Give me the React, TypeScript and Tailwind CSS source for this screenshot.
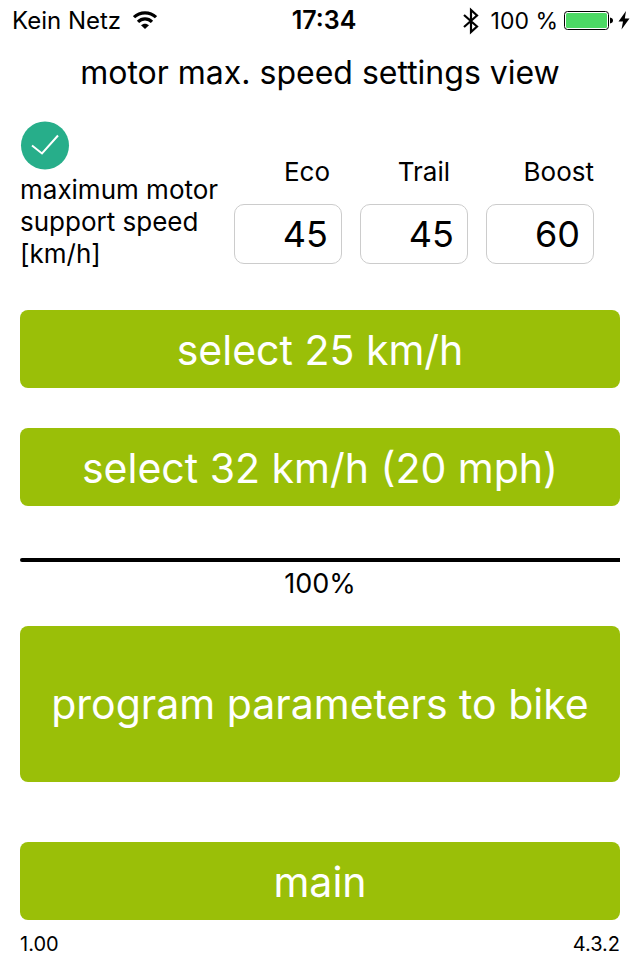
import { useState } from "react"

const BluetoothIcon = () => (
  <svg className="h-7 w-4" viewBox="0 0 16 28" fill="none" stroke="black" strokeWidth="2.2" aria-hidden="true">
    <path d="M1 8 L14 19.5 L8 25 V3 L14 8.5 L1 20" />
  </svg>
)

const WifiIcon = () => (
  <svg className="h-5 w-6" viewBox="0 0 24 20" fill="none" aria-hidden="true">
    <path d="M1 6.2 C7 0.3 17 0.3 23 6.2" stroke="black" strokeWidth="3.2" />
    <path d="M5 10.8 C9 6.8 15 6.8 19 10.8" stroke="black" strokeWidth="3.2" />
    <path d="M12 18 L8 14.2 C10.2 12.1 13.8 12.1 16 14.2 Z" fill="black" />
  </svg>
)

const BatteryIcon = () => (
  <svg className="h-5 w-[50px]" viewBox="0 0 50 20" aria-hidden="true">
    <rect x="0.5" y="0.5" width="44" height="18" rx="3" fill="white" stroke="black" />
    <rect x="2" y="2" width="41" height="15" rx="1.5" fill="#4cd964" />
    <path d="M46 6.5 C50 7 50 12 46 12.5 Z" fill="black" />
  </svg>
)

const BoltIcon = () => (
  <svg className="h-5 w-3" viewBox="0 0 12 20" aria-hidden="true">
    <path d="M8 0 L0.5 10.5 H5 L3.5 18.5 L11.5 7.5 H6.8 Z" fill="black" />
  </svg>
)

const StatusBar = () => (
  <header className="grid h-[42px] grid-cols-[1fr_auto_1fr] items-center pl-3 pr-2.5 text-[24px]">
    <div className="flex items-center gap-3">
      <p>Kein Netz</p>
      <WifiIcon />
    </div>
    <p className="pl-1.5 text-[25px] font-semibold">17:34</p>
    <div className="flex items-center justify-end">
      <BluetoothIcon />
      <p className="ml-3 mr-1.5 whitespace-nowrap text-[23px]">100 %</p>
      <BatteryIcon />
      <span className="ml-1"><BoltIcon /></span>
    </div>
  </header>
)

const BigButton = ({ label, tall = false }: { label: string; tall?: boolean }) => (
  <button
    type="button"
    className={`w-full rounded-lg bg-[#9abf08] px-4 text-[41px] leading-[48px] text-white ${tall ? "py-[54px]" : "pt-4 pb-3.5"}`}
  >
    {label}
  </button>
)

const modes = [
  { id: "eco", label: "Eco", speed: "45", labelClass: "pr-3" },
  { id: "trail", label: "Trail", speed: "45", labelClass: "pr-[18px]" },
  { id: "boost", label: "Boost", speed: "60", labelClass: "pr-0" },
]

const SpeedSettings = () => {
  const [speeds, setSpeeds] = useState(modes.map((mode) => mode.speed))

  return (
    <section className="flex items-end gap-3.5 pr-[26px]">
      <div className="w-[200px] shrink-0">
        <svg className="h-[50px] w-[50px]" viewBox="0 0 50 50" fill="none" role="img" aria-label="ok">
          <circle cx="25" cy="25.5" r="24" fill="#27ae8a" />
          <path d="M12 25.5 L22 33.5 L38 15.5" stroke="white" strokeWidth="2" />
        </svg>
        <p className="mt-1 text-[26px] leading-8">maximum motor support speed [km/h]</p>
      </div>
      <div className="mb-1.5 grid flex-1 grid-cols-3 gap-[18px]">
        {modes.map((mode, i) => (
          <div key={mode.id} className="flex min-w-0 flex-col gap-4">
            <label htmlFor={mode.id} className={`text-right text-[26px] leading-8 ${mode.labelClass}`}>
              {mode.label}
            </label>
            <input
              id={mode.id}
              type="text"
              inputMode="numeric"
              value={speeds[i]}
              onChange={(e) => setSpeeds(speeds.map((s, j) => (j === i ? e.target.value : s)))}
              className="h-[60px] w-full rounded-[10px] border border-[#cccccc] bg-white px-[13px] text-right text-[36px]"
            />
          </div>
        ))}
      </div>
    </section>
  )
}

export default function App() {
  return (
    <div className="min-h-screen bg-white font-['Inter',sans-serif] text-black">
      <StatusBar />
      <main className="px-5">
        <h1 className="pt-[11px] text-center text-[32px] leading-10">motor max. speed settings view</h1>
        <div className="mt-[27px]">
          <SpeedSettings />
        </div>
        <div className="mt-10 flex flex-col gap-10">
          <BigButton label="select 25 km/h" />
          <BigButton label="select 32 km/h (20 mph)" />
        </div>
        <div className="mt-[52px] h-1 rounded-l-sm bg-black" />
        <p className="mt-1 text-center text-[27px] leading-9">100%</p>
        <div className="mt-6 flex flex-col gap-[60px]">
          <BigButton label="program parameters to bike" tall />
          <BigButton label="main" />
        </div>
      </main>
      <footer className="flex justify-between px-5 pt-3 text-[20px] leading-6">
        <p>1.00</p>
        <p>4.3.2</p>
      </footer>
    </div>
  )
}
